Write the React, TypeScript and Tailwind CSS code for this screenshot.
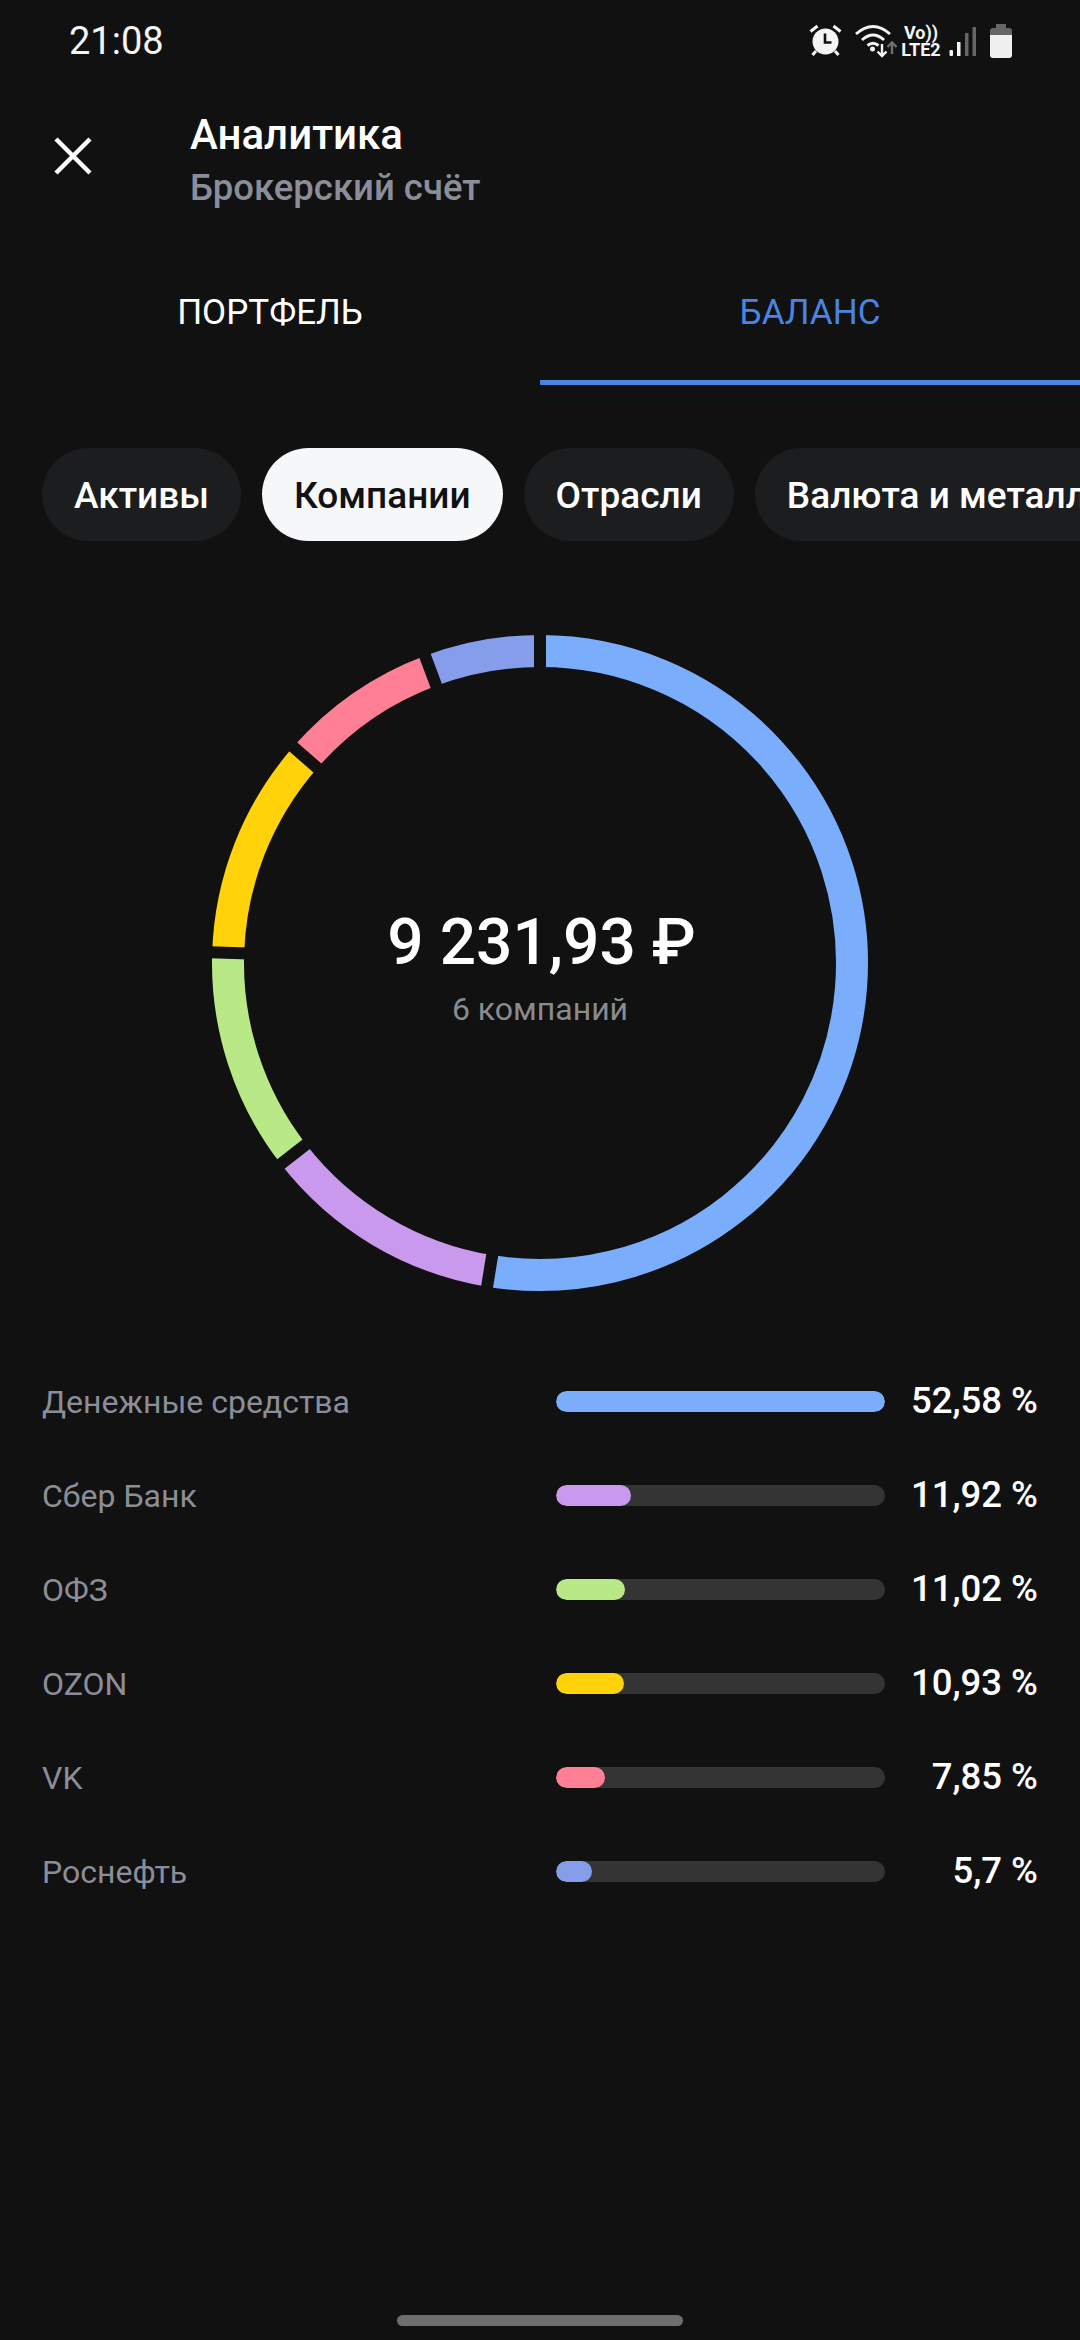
const segments = [
  { name: "Денежные средства", value: 52.58, label: "52,58 %", color: "#7aaefc" },
  { name: "Сбер Банк", value: 11.92, label: "11,92 %", color: "#c999ee" },
  { name: "ОФЗ", value: 11.02, label: "11,02 %", color: "#b9e986" },
  { name: "OZON", value: 10.93, label: "10,93 %", color: "#ffd20a" },
  { name: "VK", value: 7.85, label: "7,85 %", color: "#ff8095" },
  { name: "Роснефть", value: 5.7, label: "5,7 %", color: "#859deb" },
];

const chips = ["Активы", "Компании", "Отрасли", "Валюта и металлы"];

const CX = 330;
const CY = 330;
const R = 312;

const point = (pct: number, r: number) => {
  const a = (pct / 100) * Math.PI * 2;
  return [CX + r * Math.sin(a), CY - r * Math.cos(a)];
};

const Ring = () => {
  let acc = 0;
  const arcs = segments.map((s) => {
    const from = acc;
    acc += s.value;
    const [x1, y1] = point(from, R);
    const [x2, y2] = point(Math.min(acc, 99.999), R);
    return { color: s.color, from, d: `M${x1} ${y1}A${R} ${R} 0 ${s.value > 50 ? 1 : 0} 1 ${x2} ${y2}` };
  });
  return (
    <svg width="660" height="660" viewBox="0 0 660 660" className="col-start-1 row-start-1">
      {arcs.map((a) => (
        <path key={a.color} d={a.d} fill="none" stroke={a.color} strokeWidth="32" />
      ))}
      {arcs.map((a) => {
        const [x1, y1] = point(a.from, 280);
        const [x2, y2] = point(a.from, 345);
        return <line key={a.from} x1={x1} y1={y1} x2={x2} y2={y2} stroke="#111112" strokeWidth="12" />;
      })}
    </svg>
  );
};

const StatusIcons = () => (
  <div className="flex items-center">
    {/* alarm */}
    <svg width="34" height="34" viewBox="0 0 34 34">
      <circle cx="16.500" cy="17.500" r="13" fill="#f4f4f4" />
      <path d="M16 9.500v9h6.500" fill="none" stroke="#111112" strokeWidth="2.600" />
      <path d="M1.500 7.500l7-5.500M31.500 7.500l-7-5.500M7 27l-3.500 4M26 27l3.500 4" stroke="#f4f4f4" strokeWidth="3" fill="none" />
    </svg>
    {/* wifi */}
    <svg width="42" height="34" viewBox="0 0 42 34" className="ml-[12px]">
      <path d="M1 10Q18-5 35 10M7 16Q18 6 29 16M12.500 21.500Q18 17 23.500 21.500" fill="none" stroke="#f4f4f4" strokeWidth="3" />
      <circle cx="17.500" cy="25" r="2.500" fill="#f4f4f4" />
      <path d="M27 20v12M22.500 27.500l4.500 4.500 4.500-4.500" fill="none" stroke="#f4f4f4" strokeWidth="2.400" />
      <path d="M37 30V19M32.500 23l4.500-4.500 4.500 4.500" fill="none" stroke="#6f6f6f" strokeWidth="2.400" />
    </svg>
    <div className="ml-[4px] w-[40px] flex flex-col items-center font-['Roboto',sans-serif] font-bold text-[#f4f4f4] text-[18px] leading-[17px]">
      <span>Vo))</span>
      <span>LTE2</span>
    </div>
    {/* signal */}
    <svg width="28" height="34" viewBox="0 0 28 34" className="ml-[8px]">
      <rect x="0.500" y="26" width="3.500" height="6" rx="1" fill="#f4f4f4" />
      <rect x="8" y="18" width="3.500" height="14" fill="#f4f4f4" />
      <rect x="16" y="9" width="3.500" height="23" fill="#666666" />
      <rect x="23.500" y="3" width="3.500" height="29" fill="#666666" />
    </svg>
    {/* battery */}
    <svg width="22" height="34" viewBox="0 0 22 34" className="ml-[13px]">
      <path d="M6 0h10v4h3a3 3 0 0 1 3 3v5H0V7a3 3 0 0 1 3-3h3z" fill="#666666" />
      <path d="M0 11h22v20a3 3 0 0 1-3 3H3a3 3 0 0 1-3-3z" fill="#f0f0f0" />
    </svg>
  </div>
);

const App = () => {
  return (
    <div className="h-[2340px] w-[1080px] overflow-hidden bg-[#111112] font-['Roboto',sans-serif] text-white flex flex-col">
      {/* Status bar */}
      <div className="h-[82px] pl-[69px] pr-[68px] flex items-center justify-between shrink-0">
        <span className="text-[38px] leading-none text-[#f4f4f4]">21:08</span>
        <StatusIcons />
      </div>

      {/* Header */}
      <div className="h-[158px] flex items-center shrink-0">
        <div className="w-[190px] pl-[54px] mb-[10px] shrink-0">
          <svg width="38" height="38" viewBox="0 0 38 38" className="block">
            <path d="M2 2l34 34M36 2L2 36" stroke="white" strokeWidth="4.500" fill="none" />
          </svg>
        </div>
        <div className="flex flex-col">
          <span className="text-[42px] leading-[54px] font-medium">Аналитика</span>
          <span className="text-[36.5px] leading-[52px] font-medium text-[#8b8e98]">Брокерский счёт</span>
        </div>
      </div>

      {/* Tabs */}
      <div className="h-[145px] flex shrink-0">
        <div className="flex-1 flex justify-center pt-[51px] text-[35px] leading-[44px]">ПОРТФЕЛЬ</div>
        <div className="flex-1 flex justify-center pt-[51px] text-[35px] leading-[44px] text-[#4a84e0] border-b-[5px] border-[#4a84e0]">БАЛАНС</div>
      </div>

      {/* Chips */}
      <div className="mt-[63px] pl-[42px] flex gap-[21px] overflow-hidden shrink-0">
        {chips.map((c) => (
          <div
            key={c}
            className={
              c === "Компании"
                ? "h-[93px] px-[32px] pt-[2px] rounded-full flex items-center shrink-0 text-[37px] font-medium bg-[#f6f7f9] text-[#111112]"
                : "h-[93px] px-[32px] pt-[2px] rounded-full flex items-center shrink-0 text-[37px] font-medium bg-[#1c1d1f] text-white"
            }
          >
            {c}
          </div>
        ))}
      </div>

      {/* Donut */}
      <div className="mt-[92px] flex justify-center shrink-0">
        <div className="grid w-[660px] h-[660px]">
          <Ring />
          <div className="col-start-1 row-start-1 flex flex-col items-center pt-[272px]">
            <span className="pl-[3px] text-[64px] leading-[76px] font-medium">9 231,93 ₽</span>
            <span className="mt-[8px] text-[32px] leading-[40px] text-[#8a8b8f]">6 компаний</span>
          </div>
        </div>
      </div>

      {/* Legend */}
      <div className="mt-[87px] pl-[42px] pr-[42px] flex flex-col gap-[51px]">
        {segments.map((s) => (
          <div key={s.name} className="h-[43px] flex items-center">
            <span className="w-[514px] text-[32px] text-[#8b8e98] shrink-0">{s.name}</span>
            <div className="w-[329px] h-[21px] rounded-full bg-[#343434] overflow-hidden shrink-0">
              <div className="h-full rounded-full" style={{ width: `${(s.value / 52.58) * 100}%`, backgroundColor: s.color }} />
            </div>
            <span className="flex-1 text-right text-[36.5px] font-medium">{s.label}</span>
          </div>
        ))}
      </div>

      {/* Home indicator */}
      <div className="mt-auto mb-[14px] mx-auto w-[286px] h-[11px] rounded-full bg-[#6e6e6e]" />
    </div>
  );
};

export default App;
